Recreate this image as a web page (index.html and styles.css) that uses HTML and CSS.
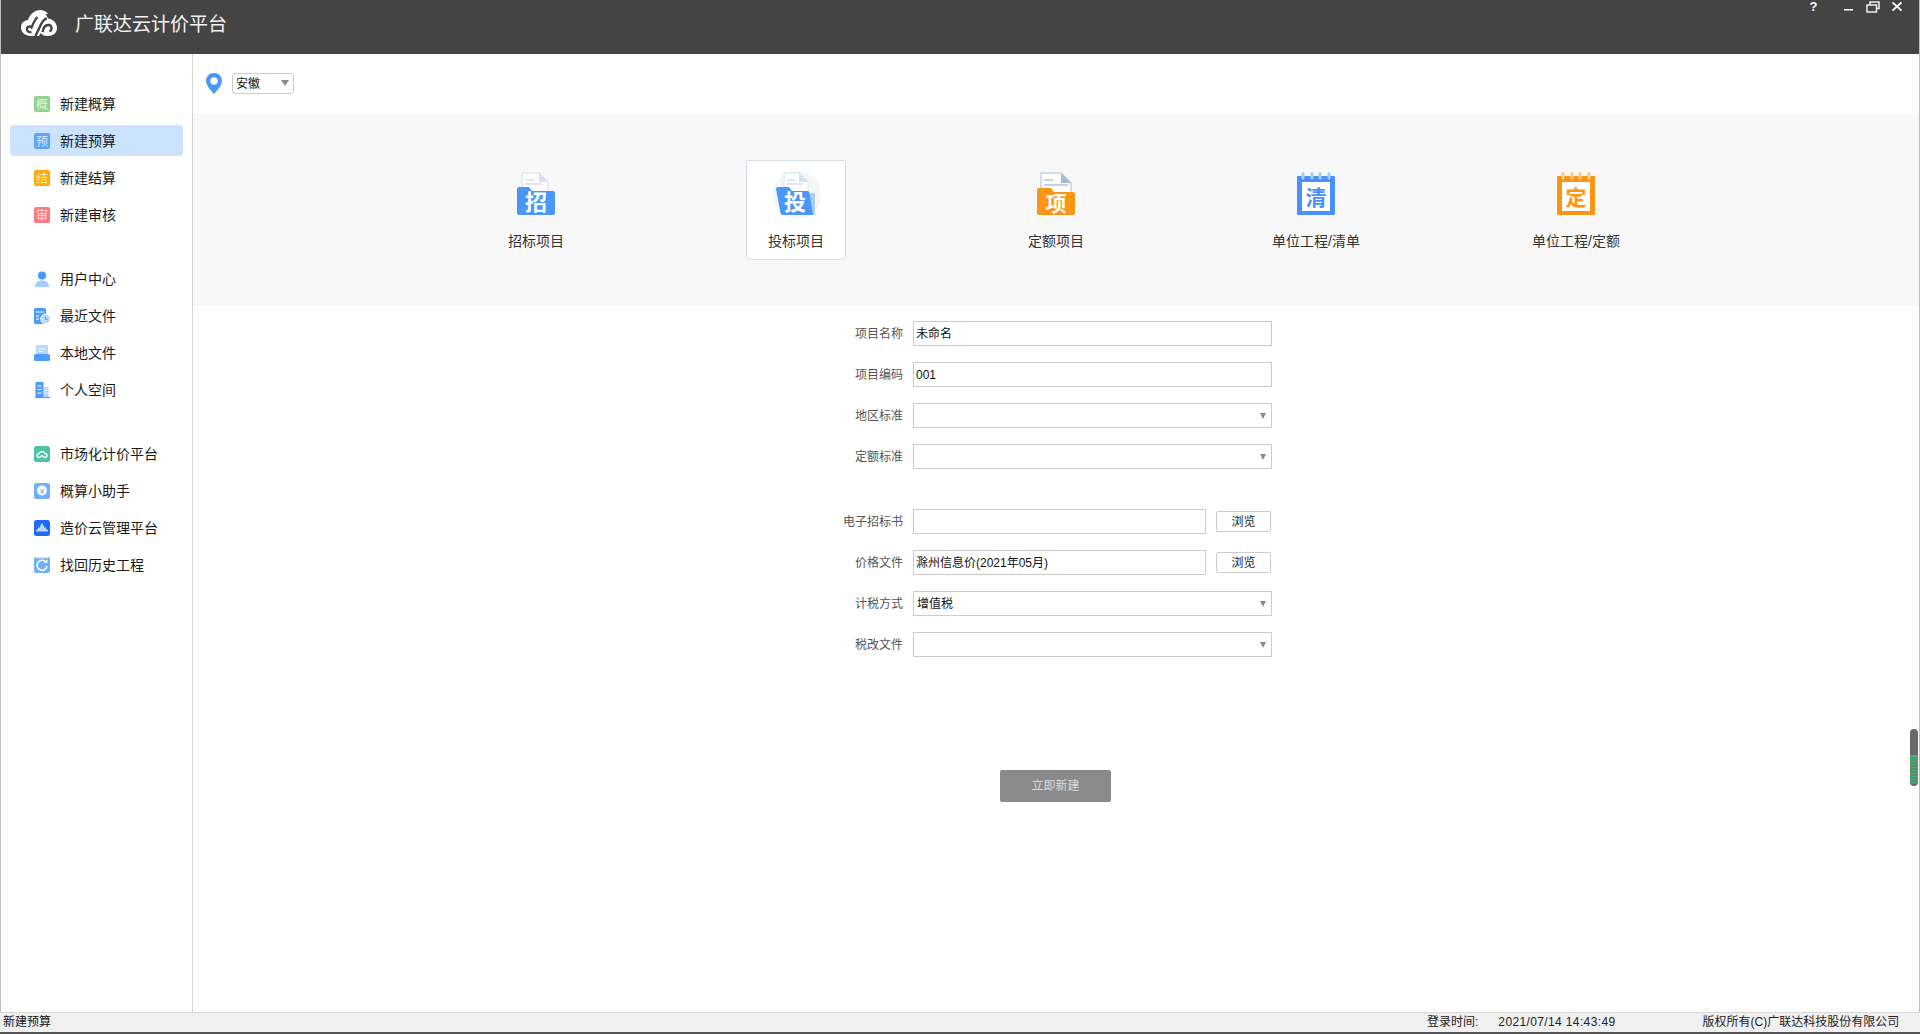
FILE: index.html
```html
<!DOCTYPE html>
<html lang="zh-CN">
<head>
<meta charset="utf-8">
<title>广联达云计价平台</title>
<link rel="stylesheet" href="styles.css">
</head>
<body>
<div class="app">
  <header class="titlebar">
    <svg class="logo" viewBox="0 0 36 26" width="36" height="26">
      <path d="M10 26C4 26 0 22 0 17.500C0 13 3 10.500 7 10C9 4 14 0 19 0C22 0 25 1.500 27 3.500L24.500 4.500C25.500 5.500 26.500 7 27 8.500C32 9 36 13 36 18C36 23 32 26 27 26C23 26 21 25 19.500 23L18 26z" fill="#fff"/>
      <path d="M16.500 7C13.500 10 12 14 10.500 17.500C8.500 15.500 5.500 17 6 19.500C6.300 21.500 8 22.500 10.500 22" fill="none" stroke="#444" stroke-width="2.400"/>
      <path d="M26 8.500C22.500 9 20.500 13 19 16.500L14.500 26" fill="none" stroke="#444" stroke-width="2.400"/>
      <path d="M21.500 22C22.500 17 25 14.500 28 15C31 15.500 31.500 20 28.500 21.500" fill="none" stroke="#444" stroke-width="2.400"/>
    </svg>
    <h1 class="apptitle">广联达云计价平台</h1>
    <div class="winctrl">
      <span class="help">?</span>
      <svg class="wbtn" width="10" height="12" viewBox="0 0 10 12"><rect x="0" y="8" width="9" height="1.500" fill="#fff"/></svg>
      <svg class="wbtn" width="14" height="12" viewBox="0 0 14 12"><path d="M4 3.500V1h9v6.500h-2.500M1 4h9.500v7H1z" fill="none" stroke="#eee" stroke-width="1.500"/></svg>
      <svg class="wbtn" width="10" height="12" viewBox="0 0 10 12"><path d="M0.500 1.500L9.500 9.500M9.500 1.500L0.500 9.500" stroke="#fff" stroke-width="1.800"/></svg>
    </div>
  </header>

  <div class="body">
    <nav class="sidebar">
      <ul class="navgroup">
        <li class="navitem"><svg class="navicon" viewBox="0 0 16 16"><rect width="16" height="16" rx="2" fill="#8fd392"/><text x="8" y="12.500" class="gl">概</text></svg>新建概算</li>
        <li class="navitem active"><svg class="navicon" viewBox="0 0 16 16"><rect width="16" height="16" rx="2" fill="#5aa5fb"/><text x="8" y="12.500" class="gl">预</text></svg>新建预算</li>
        <li class="navitem"><svg class="navicon" viewBox="0 0 16 16"><rect width="16" height="16" rx="2" fill="#fdaa0b"/><text x="8" y="12.500" class="gl">结</text></svg>新建结算</li>
        <li class="navitem"><svg class="navicon" viewBox="0 0 16 16"><rect width="16" height="16" rx="2" fill="#fb7b85"/><text x="8" y="12.500" class="gl">审</text></svg>新建审核</li>
      </ul>
      <ul class="navgroup">
        <li class="navitem"><svg class="navicon" viewBox="0 0 16 16"><path d="M1 16C1 11.500 4 9.500 8 9.500S15 11.500 15 16z" fill="#a3cdfd"/><circle cx="8" cy="4.500" r="4" fill="#4a97fa"/></svg>用户中心</li>
        <li class="navitem"><svg class="navicon" viewBox="0 0 16 16"><rect width="12" height="16" rx="1.500" fill="#4d9bfa"/><path d="M2 4h8M2 8h3M2 11h3" stroke="#fff" stroke-width="1.200"/><circle cx="11.500" cy="11" r="4.800" fill="#b9d8fd" stroke="#fff"/><path d="M11.500 8.500V11.300H14" stroke="#4d9bfa" fill="none"/></svg>最近文件</li>
        <li class="navitem"><svg class="navicon" viewBox="0 0 16 16"><rect x="2" y="0" width="12" height="12" rx="1.500" fill="#b6d6fd"/><path d="M4.500 4h7M4.500 6.500h4" stroke="#fff" stroke-width="1.200"/><path d="M0 10.500Q0 9 2 9H14Q16 9 16 10.500V14.500Q16 16 14.500 16H1.500Q0 16 0 14.500z" fill="#4d9bfa"/></svg>本地文件</li>
        <li class="navitem"><svg class="navicon" viewBox="0 0 16 16"><rect x="1.500" y="0" width="8" height="15" fill="#4d9bfa"/><rect x="9.500" y="5" width="5" height="10" fill="#b6d6fd"/><rect x="1" y="15" width="15" height="1" fill="#4d9bfa"/><path d="M3.500 4h4M3.500 7.500h4M3.500 11h4M11 8h2M11 11h2" stroke="#fff" stroke-width="1.200"/></svg>个人空间</li>
      </ul>
      <ul class="navgroup">
        <li class="navitem"><svg class="navicon" viewBox="0 0 16 16"><rect width="16" height="16" rx="2.500" fill="#4bc3a5"/><path d="M5 11.500C2.500 11.500 2.500 7.500 5 7.500 6 5 10 5 11 7.500 13.500 7.500 13.500 11.500 11 11.500 9.500 11.500 9 10 8 9.500 7 10 6.500 11.500 5 11.500z" fill="none" stroke="#fff" stroke-width="1.500"/></svg>市场化计价平台</li>
        <li class="navitem"><svg class="navicon" viewBox="0 0 16 16"><rect width="16" height="16" rx="2.500" fill="#6fb0fb"/><circle cx="8" cy="7.500" r="5" fill="#fff"/><text x="8" y="10.500" class="gy">¥</text></svg>概算小助手</li>
        <li class="navitem"><svg class="navicon" viewBox="0 0 16 16"><rect width="16" height="16" rx="2.500" fill="#1d6cf7"/><path d="M2 11.500V9.500H4V7.500H6V5.500H7V3.500H9V5.500H10V7.500H12V9.500H14V11.500z" fill="#b6d6fd"/></svg>造价云管理平台</li>
        <li class="navitem"><svg class="navicon" viewBox="0 0 16 16"><rect width="16" height="16" rx="2" fill="#6fb0fb"/><rect x="2" y="0" width="12" height="1.500" fill="#c7e0fd"/><path d="M12.500 6A5 5 0 1 0 13 9" fill="none" stroke="#fff" stroke-width="1.500"/><path d="M10 5.500h3.500V2.500z" fill="#fff"/></svg>找回历史工程</li>
      </ul>
    </nav>

    <main class="content">
      <div class="regionbar">
        <svg class="pin" viewBox="0 0 16 21" width="16" height="21"><path d="M8 0C3.500 0 0 3.400 0 7.800 0 13 5.500 18 8 21 10.500 18 16 13 16 7.800 16 3.400 12.500 0 8 0z" fill="#4a97fa"/><circle cx="8" cy="8" r="3.700" fill="#fff"/></svg>
        <div class="regionselect">安徽<i class="caret"></i></div>
      </div>

      <section class="types">
        <div class="type">
          <svg class="typeicon" viewBox="0 0 48 48" width="48" height="48">
            <path d="M10 2H27L36 11V30H10z" fill="#fff" stroke="#dce7f3" stroke-width="1.500"/><path d="M27 2V11H36z" fill="#d5e1ee"/><path d="M13 9H22M13 13H30" stroke="#dce7f3" stroke-width="1.800"/>
            <path d="M5 18Q5 16 7 16H17L20 20H41Q43 20 43 22V42Q43 44 41 44H7Q5 44 5 42z" fill="#4a97fa"/><text x="24" y="39" class="gi">招</text>
          </svg>
          <span class="typelabel">招标项目</span>
        </div>
        <div class="type selected">
          <svg class="typeicon" viewBox="0 0 48 48" width="48" height="48">
            <circle cx="25" cy="24" r="24" fill="#f5f6f8"/><path d="M12 2H27L36 11V30H12z" fill="#fff" stroke="#e3ebf5" stroke-width="1.500"/><path d="M27 2V11H36z" fill="#d5e1ee"/><path d="M15 9H23M15 13H31" stroke="#dce7f3" stroke-width="1.800"/><path d="M38 22H43V44H38z" fill="#a8cdfb"/>
            <path d="M4 18Q4 16 6 16H17L20 20H35Q37 20 37.500 22L41 44H11Q9 44 8.500 42z" fill="#4a97fa"/><text x="23" y="39" class="gi">投</text>
          </svg>
          <span class="typelabel">投标项目</span>
        </div>
        <div class="type">
          <svg class="typeicon" viewBox="0 0 48 48" width="48" height="48">
            <path d="M9 2H29L39 12V30H9z" fill="#fff" stroke="#c5d2e0" stroke-width="1.500"/><path d="M29 2V12H39z" fill="#a9bbd0"/><path d="M12 9H21M12 14H36" stroke="#c5d2e0" stroke-width="1.800"/>
            <path d="M5 19Q5 17 7 17H19L22 21H41Q43 21 43 23V42Q43 44 41 44H7Q5 44 5 42z" fill="#fd9514"/><text x="24" y="40" class="gi s">项</text>
          </svg>
          <span class="typelabel">定额项目</span>
        </div>
        <div class="type">
          <svg class="typeicon" viewBox="0 0 48 48" width="48" height="48">
            <rect x="5" y="5" width="38" height="39" rx="1" fill="#4a90f8"/><rect x="10" y="11" width="28" height="29" fill="#fff"/><path d="M11 2.500V7M20 2.500V7M28 2.500V7M37 2.500V7" stroke="#a8cdfb" stroke-width="3" stroke-linecap="round"/><text x="24" y="34" class="gi bl">清</text>
          </svg>
          <span class="typelabel">单位工程/清单</span>
        </div>
        <div class="type">
          <svg class="typeicon" viewBox="0 0 48 48" width="48" height="48">
            <rect x="5" y="5" width="38" height="39" rx="1" fill="#fd9514"/><rect x="10" y="11" width="28" height="29" fill="#fff"/><path d="M11 2.500V7M20 2.500V7M28 2.500V7M37 2.500V7" stroke="#fcc78c" stroke-width="3" stroke-linecap="round"/><text x="24" y="34" class="gi or">定</text>
          </svg>
          <span class="typelabel">单位工程/定额</span>
        </div>
      </section>

      <form class="form">
        <div class="group">
          <div class="row"><label class="lbl">项目名称</label><div class="field">未命名</div></div>
          <div class="row"><label class="lbl">项目编码</label><div class="field">001</div></div>
          <div class="row"><label class="lbl">地区标准</label><div class="field combo"><i class="caret"></i></div></div>
          <div class="row"><label class="lbl">定额标准</label><div class="field combo"><i class="caret"></i></div></div>
        </div>
        <div class="group">
          <div class="row"><label class="lbl">电子招标书</label><div class="field short"></div><span class="browse">浏览</span></div>
          <div class="row"><label class="lbl">价格文件</label><div class="field short">滁州信息价(2021年05月)</div><span class="browse">浏览</span></div>
          <div class="row"><label class="lbl">计税方式</label><div class="field combo pad">增值税<i class="caret"></i></div></div>
          <div class="row"><label class="lbl">税改文件</label><div class="field combo"><i class="caret"></i></div></div>
        </div>
        <div class="submit">立即新建</div>
      </form>
    </main>
  </div>

  <footer class="statusbar">
    <span class="status-left">新建预算</span>
    <span class="status-login">登录时间:</span>
    <span class="status-time">2021/07/14 14:43:49</span>
    <span class="status-copy">版权所有(C)广联达科技股份有限公司</span>
  </footer>

  <div class="scrollwidget"><div class="scrollgreen"></div></div>
</div>
</body>
</html>
```
FILE: styles.css
```css
* { box-sizing: border-box; }
html, body { margin: 0; height: 100%; overflow: hidden; }
body {
  font-family: "Liberation Sans", "Noto Sans CJK SC", sans-serif;
  font-size: 12px;
  color: #222;
  background: #fff;
}
.app {
  position: relative;
  width: 1920px;
  height: 1034px;
  display: flex;
  flex-direction: column;
  border-left: 1px solid #bdbdbd;
  border-right: 1px solid #bdbdbd;
}
.titlebar {
  height: 54px;
  flex: none;
  background: #444;
  display: flex;
  align-items: flex-start;
  padding-left: 20px;
  color: #fff;
}
.logo { margin-top: 10px; }
.apptitle {
  margin: 13px 0 0 18px;
  font-size: 19px;
  line-height: 24px;
  font-weight: 400;
  color: #f4f4f4;
}
.winctrl {
  margin-left: auto;
  display: flex;
  align-items: flex-start;
  padding: 0 17px 0 0;
}
.help { font: 700 13px/13px "Liberation Sans", sans-serif; width: 25px; margin-right: 18px; text-align: center; }
.wbtn { display: block; margin-top: 1px; margin-right: 12px; }
.wbtn:last-child { margin-right: 0; }

.body { flex: 1; display: flex; min-height: 0; }
.sidebar {
  width: 192px;
  flex: none;
  border-right: 1px solid #d4d4d4;
  padding: 34px 9px 0 9px;
  display: flex;
  flex-direction: column;
  gap: 27px;
}
.navgroup { list-style: none; margin: 0; padding: 0; }
.navitem {
  height: 31px;
  margin-bottom: 6px;
  border-radius: 4px;
  display: flex;
  align-items: center;
  padding-left: 24px;
  font-size: 14px;
  line-height: 20px;
  color: #1a1a1a;
}
.navitem.active { background: #cce3ff; }
.navicon { width: 16px; height: 16px; margin-right: 10px; flex: none; }
.gl { font-size: 12px; fill: #fff; fill-opacity: .75; text-anchor: middle; }
.gy { font-size: 8px; fill: #6fb0fb; text-anchor: middle; }

.content { flex: 1; min-width: 0; display: flex; flex-direction: column; }
.regionbar {
  height: 60px;
  flex: none;
  display: flex;
  align-items: flex-start;
  padding: 19px 0 0 13px;
}
.pin { display: block; }
.regionselect {
  position: relative;
  width: 62px;
  height: 21px;
  margin-left: 10px;
  border: 1px solid #ccc;
  border-radius: 3px;
  padding-left: 3px;
  line-height: 20px;
  color: #111;
}
.regionselect .caret { right: 4px; top: 6px; border-width: 6px 4px 0; }
.caret {
  position: absolute;
  right: 5px;
  top: 9px;
  width: 0;
  height: 0;
  border-style: solid;
  border-width: 6px 3.5px 0;
  border-color: #8a8a8a transparent transparent;
}

.types {
  height: 192px;
  flex: none;
  background: #f8f8f8;
  display: flex;
  align-items: flex-start;
  padding: 46px 0 0 293px;
  gap: 160px;
}
.type {
  width: 100px;
  height: 100px;
  flex: none;
  border: 1px solid transparent;
  border-radius: 3px;
  display: flex;
  flex-direction: column;
  align-items: center;
  padding-top: 10px;
}
.type.selected { background: #fff; border-color: #d6dee8; }
.typeicon { display: block; flex: none; }
.typelabel {
  margin-top: 12px;
  font-size: 14px;
  line-height: 20px;
  white-space: nowrap;
  color: #333;
}
.gi { font-size: 22px; font-weight: 700; fill: #fff; text-anchor: middle; }
.gi.s { font-size: 21px; }
.gi.bl { font-size: 21px; fill: #4a90f8; }
.gi.or { font-size: 21px; fill: #fd9514; }

.form {
  flex: 1;
  display: flex;
  flex-direction: column;
  padding-top: 15px;
}
.group { margin-bottom: 24px; }
.row {
  display: flex;
  align-items: center;
  height: 25px;
  margin-bottom: 16px;
}
.lbl {
  width: 720px;
  padding-right: 10px;
  text-align: right;
  color: #555;
  line-height: 16px;
}
.field {
  position: relative;
  width: 359px;
  height: 25px;
  border: 1px solid #ccc;
  padding-left: 2px;
  line-height: 24px;
  color: #111;
  white-space: nowrap;
}
.field.short { width: 293px; }
.field.pad { padding-left: 3px; }
.browse {
  width: 55px;
  height: 21px;
  margin-left: 10px;
  border: 1px solid #ccc;
  border-radius: 2px;
  text-align: center;
  line-height: 20px;
  color: #222;
}
.submit {
  align-self: flex-start;
  margin: 73px 0 0 807px;
  width: 111px;
  height: 32px;
  border-radius: 2px;
  background: #8a8a8a;
  color: #ddd;
  text-align: center;
  line-height: 32px;
}

.statusbar {
  height: 22px;
  flex: none;
  background: #f0f0f0;
  border-top: 1px solid #d9d9d9;
  border-bottom: 2px solid #555;
  display: flex;
  align-items: flex-start;
  line-height: 18px;
  color: #222;
  margin-left: -1px;
  margin-right: -1px;
  padding-left: 3px;
}
.status-left { color: #111; }
.status-login { margin-left: 1376px; }
.status-time { margin-left: 20px; letter-spacing: .37px; }
.status-copy { margin-left: 87px; }

.scrollwidget {
  position: absolute;
  right: 1px;
  top: 729px;
  width: 8px;
  height: 57px;
  border-radius: 4px;
  background: #686868;
  overflow: hidden;
}
.scrollgreen {
  margin-top: 26px;
  height: 29px;
  background: repeating-linear-gradient(#3cb56a 0 1.500px, #5f8a6f 1.500px 3px);
}
```
